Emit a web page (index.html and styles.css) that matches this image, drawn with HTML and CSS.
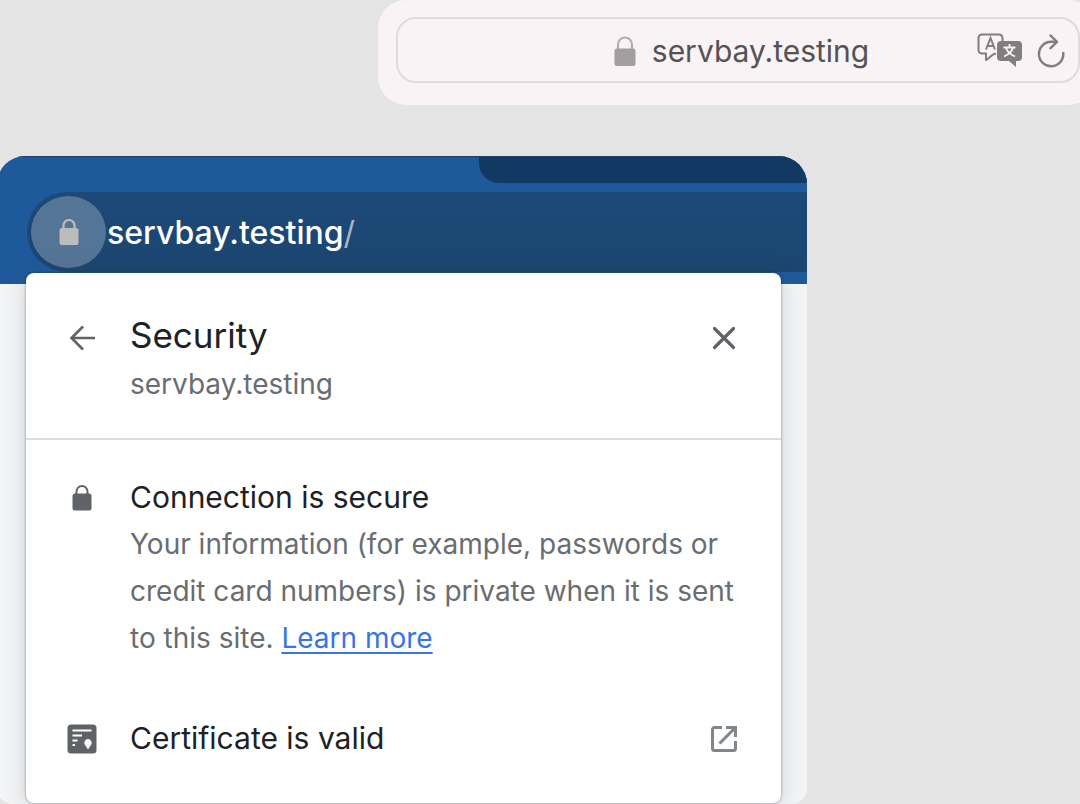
FILE: index.html
```html
<!DOCTYPE html>
<html lang="en">

<head>
    <meta charset="utf-8">
    <title>servbay.testing</title>
    <link rel="stylesheet" href="styles.css">
</head>

<body>
    <header class="safari">
        <div class="safari-field">
            <div class="safari-address">
                <svg class="safari-lock" viewBox="0 0 22 30">
                    <path d="M4 14V8.500a7 7 0 0 1 14 0V14" fill="none" stroke="#b3aeaf" stroke-width="2.200" />
                    <rect x="0.500" y="12.500" width="21" height="17.500" rx="2.500" fill="#a39e9f" />
                </svg>
                <span>servbay.testing</span>
            </div>
            <div class="safari-actions">
                <button type="button" aria-label="Translate">
                    <svg width="46" height="36" viewBox="0 0 46 36">
                        <path d="M19 20.500c-4 0-5 4-10 6.500v-6.500H5a3.500 3.500 0 0 1-3.500-3.500V5A3.500 3.500 0 0 1 5 1.500h17A3.500 3.500 0 0 1 25.500 5v4" fill="none" stroke="#827d7f" stroke-width="2" stroke-linejoin="round" />
                        <path d="M9 16.500L13.500 5l4.500 11.500M10.500 13h6" fill="none" stroke="#827d7f" stroke-width="2" />
                        <path d="M24 8h17a4 4 0 0 1 4 4v12a4 4 0 0 1-4 4h-2v6l-7-6h-8a4 4 0 0 1-4-4V12a4 4 0 0 1 4-4z" fill="#827d7f" />
                        <path d="M32.500 11v3.500M26.500 14.500h12M29 14.500c1 4 4.500 7 9 9M36 14.500c-1 4-4.500 7-9 9" fill="none" stroke="#f9f3f5" stroke-width="1.800" />
                    </svg>
                </button>
                <button type="button" aria-label="Reload">
                    <svg width="28" height="34" viewBox="0 0 28 34">
                        <path d="M19.500 7.800H14A12.200 12.200 0 1 0 26.300 19" fill="none" stroke="#827d7f" stroke-width="2.400" stroke-linecap="round" />
                        <path d="M13.500 1.500l6.500 6.300-6.500 6.400" fill="none" stroke="#827d7f" stroke-width="2.400" stroke-linecap="round" stroke-linejoin="round" />
                    </svg>
                </button>
            </div>
        </div>
    </header>

    <main class="chrome">
        <div class="toolbar">
            <div class="tab-strip"></div>
            <div class="omnibox">
                <button class="site-info" type="button" aria-label="View site information">
                    <svg width="20" height="26" viewBox="0 0 20 26">
                        <path d="M4.500 11V6.500a5.500 5.500 0 0 1 11 0V11" fill="none" stroke="#bcbcbd" stroke-width="2.200" />
                        <rect x="0.500" y="9" width="19" height="17" rx="2.500" fill="#bcbcbd" />
                    </svg>
                </button>
                <span class="url">servbay.testing<span class="slash">/</span></span>
            </div>
        </div>

        <section class="popup">
            <div class="popup-header">
                <button type="button" aria-label="Back">
                    <svg width="28" height="28" viewBox="0 0 28 28">
                        <path d="M27 14H3.500M15 2.500L3.500 14 15 25.500" fill="none" stroke="#5f6368" stroke-width="2.600" />
                    </svg>
                </button>
                <h1>Security</h1>
                <button type="button" aria-label="Close">
                    <svg width="24" height="24" viewBox="0 0 24 24">
                        <path d="M2.500 2.500l19 19M21.500 2.500l-19 19" fill="none" stroke="#5f6368" stroke-width="3.200" stroke-linecap="round" />
                    </svg>
                </button>
                <p class="host">servbay.testing</p>
            </div>

            <div class="row connection">
                <svg width="20" height="26" viewBox="0 0 20 26">
                    <path d="M4.500 11V6.500a5.500 5.500 0 0 1 11 0V11" fill="none" stroke="#5f6368" stroke-width="2" />
                    <rect x="0.500" y="8.500" width="19" height="17" rx="2.500" fill="#5f6368" />
                </svg>
                <h2>Connection is secure</h2>
                <p class="details">Your information (for example, passwords or credit card numbers) is private when it is sent to this site. <a href="#">Learn more</a></p>
            </div>

            <div class="row certificate">
                <svg width="30" height="30" viewBox="0 0 30 30">
                    <rect x="0.500" y="0.500" width="29" height="29" rx="3.500" fill="#5f6368" />
                    <path d="M5.500 6.500h19M5.500 11.500h9.500M5.500 16.500h5M5.500 21h2.500" stroke="#fff" stroke-width="2.200" />
                    <path d="M21 15a4 4 0 0 1 2 7.300L21 25.500l-2-3.200A4 4 0 0 1 21 15z" fill="#fff" />
                </svg>
                <h2>Certificate is valid</h2>
                <button type="button" aria-label="Open certificate">
                    <svg width="28" height="28" viewBox="0 0 28 28">
                        <path d="M12 2.500H4.500a2 2 0 0 0-2 2v19a2 2 0 0 0 2 2h19a2 2 0 0 0 2-2V16" fill="none" stroke="#80868b" stroke-width="3" />
                        <path d="M9.500 18.500L24 4" stroke="#80868b" stroke-width="3" />
                        <path d="M16 1h11v11h-3V6.500L21.500 4H16z" fill="#80868b" />
                    </svg>
                </button>
            </div>
        </section>
    </main>
</body>

</html>
```
FILE: styles.css
```css
* {
    box-sizing: border-box;
}

body {
    margin: 0;
    background-color: #e4e4e4;
    font-family: Inter, "Liberation Sans", sans-serif;
    overflow-x: hidden;
}

h1,
h2,
p {
    margin: 0;
    font-weight: 400;
}

button {
    display: flex;
    align-items: center;
    justify-content: center;
    padding: 0;
    border: none;
    background: none;
    cursor: pointer;
}

svg {
    display: block;
}

/* Safari address bar */
.safari {
    margin-left: 35%;
    margin-right: -16px;
    padding: 17px 16px 22px 18px;
    background-color: #f9f3f5;
    border-radius: 28px;
}

.safari-field {
    display: grid;
    grid-template-columns: 1fr auto 1fr;
    align-items: center;
    height: 66px;
    padding: 2px 13px 0 20px;
    border: 2px solid #e0dadc;
    border-radius: 20px;
}

.safari-address {
    grid-column: 2;
    display: flex;
    align-items: center;
    gap: 16px;
    color: #545254;
    font-size: 30px;
}

.safari-lock {
    width: 22px;
    height: 30px;
}

.safari-actions {
    display: flex;
    justify-content: flex-end;
    gap: 14px;
}

/* Chrome window */
.chrome {
    width: 75%;
    margin-top: 51px;
    margin-left: -3px;
    background-color: #f3f5f7;
    border-radius: 28px 28px 16px 16px;
    overflow: hidden;
}

.toolbar {
    height: 128px;
    background-color: #1e5a9b;
    border-top: 1px solid #1b4268;
}

.tab-strip {
    width: 328px;
    height: 26px;
    margin-left: auto;
    background-color: #123962;
    border-bottom-left-radius: 20px;
}

.omnibox {
    display: flex;
    align-items: center;
    height: 80px;
    margin-top: 9px;
    margin-left: 30px;
    padding-left: 4px;
    background: linear-gradient(#1d4979, #1b4670);
    border-radius: 40px 0 0 40px;
}

.site-info {
    width: 75px;
    height: 72px;
    background-color: #557597;
    border-radius: 50%;
}

.url {
    margin-left: 1px;
    color: #fff;
    font-size: 32px;
    font-weight: 500;
}

.slash {
    color: #a5b6c9;
    font-weight: 400;
}

/* Security popup */
.popup {
    position: relative;
    margin: -11px 26px 1px 29px;
    background-color: #fff;
    border-radius: 8px;
    box-shadow: 0 0 3px rgba(0, 0, 0, 0.4), 0 4px 24px rgba(60, 64, 67, 0.2);
}

.popup-header,
.row {
    display: grid;
    grid-template-columns: 32px 1fr 32px;
    column-gap: 32px;
    align-items: center;
    justify-items: center;
    padding: 0 41px 0 40px;
}

.popup-header {
    padding-top: 38px;
    padding-bottom: 28px;
    border-bottom: 2px solid #dcdde1;
}

.popup-header button {
    padding-top: 5px;
}

h1,
h2,
p {
    justify-self: start;
}

h1 {
    color: #202124;
    font-size: 35px;
    line-height: 48px;
}

h2 {
    color: #202124;
    font-size: 30px;
    line-height: 47px;
}

.host,
.details {
    grid-column: 2;
    color: #696d71;
    font-size: 28px;
}

.host {
    line-height: 51px;
}

.details {
    grid-column: 2 / 4;
    line-height: 47px;
}

.connection {
    padding-top: 34px;
}

.certificate {
    padding-top: 53px;
    padding-bottom: 41px;
}

a {
    color: #3874e8;
    text-decoration-thickness: 2px;
    text-underline-offset: 4px;
}
```
